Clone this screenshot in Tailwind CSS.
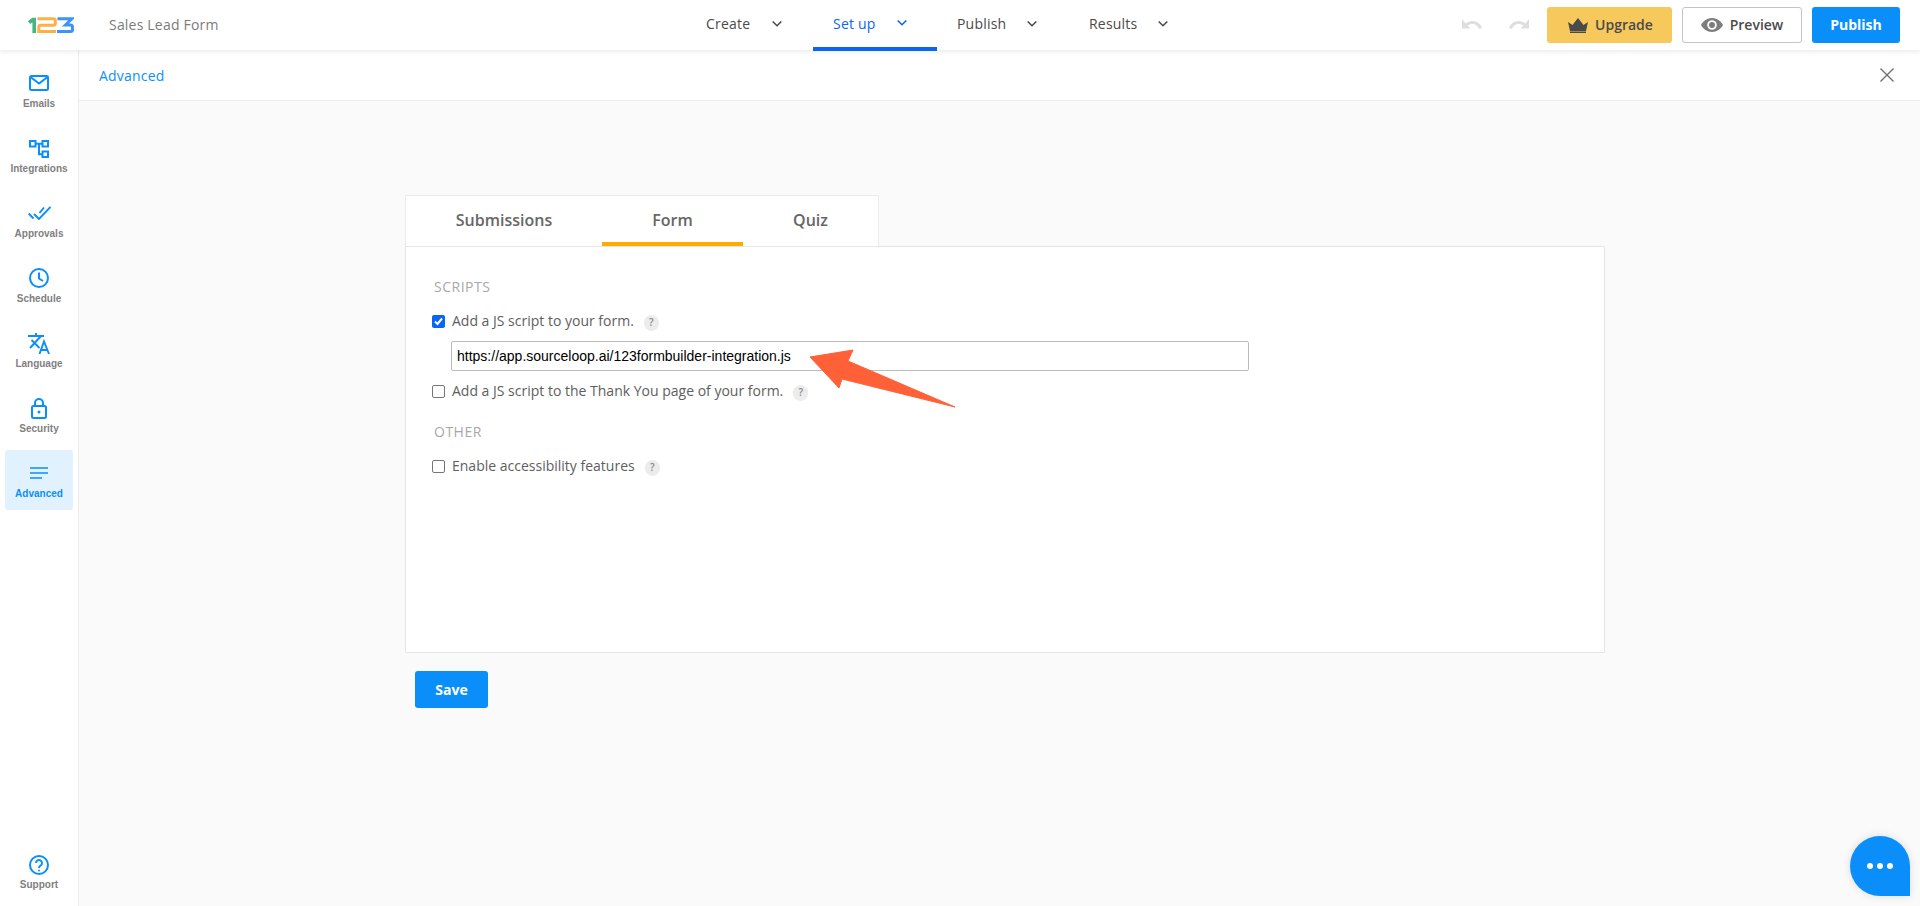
<!DOCTYPE html>
<html lang="en">
<head>
<meta charset="utf-8">
<title>Sales Lead Form</title>
<script src="https://cdn.jsdelivr.net/npm/@tailwindcss/browser@4"></script>
</head>
<body class="h-[906px] w-[1920px] overflow-hidden bg-[#fafafa] font-['Open_Sans','Noto_Sans',sans-serif]">
<div class="relative flex h-[906px] flex-col">

    <!-- top bar -->
    <header class="relative z-10 flex h-[50px] shrink-0 items-center bg-white shadow-[0_1px_6px_rgba(0,0,0,0.1)]">
        <svg class="ml-[28px] h-[18px] w-[46px]" viewBox="0 0 46 18" fill="none">
            <path d="M1 6.500 5 3.500H6.200V17" stroke="#41b883" stroke-width="3.600"/>
            <path d="M9.500 2.700H25.500Q27.300 2.700 27.300 4.500V7.500Q27.300 9.300 25.500 9.300H12.500Q10.800 9.300 10.800 11V15.500H28" stroke="#fcb045" stroke-width="3"/>
            <path d="M29.500 2.700H44L37.500 9H42.500Q44.500 9 44.500 11V13.500Q44.500 15.500 42.500 15.500H29" stroke="#3d94f6" stroke-width="3"/>
        </svg>
        <span class="ml-[35px] text-sm font-medium tracking-[0.2px] text-[#7b7b7b]">Sales Lead Form</span>

        <nav class="absolute left-[813px] top-0 flex h-[50px] items-center text-sm font-medium tracking-[0.2px] text-[#4a4a4a]">
            <a class="ml-[-107px] flex h-full w-[107px] items-center"><span class="mb-[2px]">Create</span><svg class="mb-[2px] ml-[22px] h-2 w-[10px]" viewBox="0 0 10 8" fill="none" stroke="currentColor" stroke-width="1.600"><path d="M.7 1.500 5 5.700 9.300 1.500"/></svg></a>
            <a class="relative flex h-full w-[124px] items-center pl-[20px] text-[#0a66f0]"><span class="mb-[2px]">Set up</span><svg class="mb-1 ml-[21px] h-2 w-[10px]" viewBox="0 0 10 8" fill="none" stroke="currentColor" stroke-width="1.600"><path d="M.7 1.500 5 5.700 9.300 1.500"/></svg><span class="absolute bottom-[-1px] left-0 h-1 w-full bg-[#0a66f0]"></span></a>
            <a class="ml-[20px] flex h-full w-[132px] items-center"><span class="mb-[2px]">Publish</span><svg class="mb-[2px] ml-[21px] h-2 w-[10px]" viewBox="0 0 10 8" fill="none" stroke="currentColor" stroke-width="1.600"><path d="M.7 1.500 5 5.700 9.300 1.500"/></svg></a>
            <a class="flex h-full items-center"><span class="mb-[2px]">Results</span><svg class="mb-[2px] ml-[21px] h-2 w-[10px]" viewBox="0 0 10 8" fill="none" stroke="currentColor" stroke-width="1.600"><path d="M.7 1.500 5 5.700 9.300 1.500"/></svg></a>
        </nav>

        <div class="ml-auto mr-[20px] flex items-center">
            <svg class="h-[14px] w-[21px] text-[#dedede]" viewBox="0 0 21 14" fill="currentColor"><path d="M0 1v9.500h8.500L5.600 7.600C7 6.600 8.500 6 10.300 6c3.200 0 5.800 2 6.800 5l3-1C18.700 5.800 14.800 3 10.300 3 7.800 3 5.500 3.900 3.700 5.500Z"/></svg>
            <svg class="ml-[25px] h-[14px] w-[21px] -scale-x-100 text-[#dedede]" viewBox="0 0 21 14" fill="currentColor"><path d="M0 1v9.500h8.500L5.600 7.600C7 6.600 8.500 6 10.300 6c3.200 0 5.800 2 6.800 5l3-1C18.700 5.800 14.800 3 10.300 3 7.800 3 5.500 3.900 3.700 5.500Z"/></svg>
            <button class="ml-[18px] flex h-[36px] w-[125px] items-center justify-center rounded-[3px] bg-[#f7c95c] pl-[2px] text-sm font-semibold text-[#4a4a4a]">
                <svg class="mr-[7px] h-[15px] w-5" viewBox="0 0 20 15" fill="currentColor"><path d="M0 4l4.500 3L10 0l5.500 7L20 4l-2 9H2Z"/><rect x="2" y="13.500" width="16" height="1.500"/></svg>Upgrade
            </button>
            <button class="ml-[10px] flex h-[36px] w-[120px] items-center justify-center rounded-[3px] border border-[#c4c4c4] bg-white text-sm font-semibold text-[#4a4a4a]">
                <svg class="mr-[7px] h-[14px] w-[22px] text-[#7d7d7d]" viewBox="0 0 22 14" fill="currentColor"><path fill-rule="evenodd" d="M11 0C6 0 2.300 3 0 7c2.300 4 6 7 11 7s8.700-3 11-7c-2.300-4-6-7-11-7Zm0 2.200a4.800 4.800 0 1 1 0 9.600 4.800 4.800 0 0 1 0-9.600Z"/><circle cx="11" cy="7" r="3"/></svg>Preview
            </button>
            <button class="ml-[10px] h-[36px] w-[88px] rounded-[3px] bg-[#0a8ffa] text-sm font-bold text-white">Publish</button>
        </div>
    </header>

    <div class="flex min-h-0 flex-1">
        <!-- left rail -->
        <aside class="flex w-[79px] shrink-0 flex-col items-center border-r border-[#ececec] bg-white pt-[10px] font-['Liberation_Sans',sans-serif] text-[10px] font-bold text-[#808080]">
            <a class="flex h-[65px] w-[68px] flex-col items-center pt-[15px]">
                <svg class="h-4 w-5 text-[#0a8ffa]" viewBox="0 0 20 16" fill="none" stroke="currentColor" stroke-width="2"><rect x="1" y="1" width="18" height="14" rx="1.500"/><path d="M1.500 2 10 8.500 18.500 2"/></svg>
                <span class="mt-[7px] leading-[12px]">Emails</span>
            </a>
            <a class="flex h-[65px] w-[68px] flex-col items-center pt-[15px]">
                <svg class="h-[18px] w-5 text-[#0a8ffa]" viewBox="0 0 20 18" fill="none" stroke="currentColor" stroke-width="2"><rect x="1" y="1" width="5.500" height="5.500"/><rect x="13.500" y="1" width="5.500" height="5.500"/><rect x="13.500" y="11.500" width="5.500" height="5.500"/><path d="M6.500 3.700H13.500M10 3.700V14.200H13.500"/></svg>
                <span class="mt-[5px] leading-[12px]">Integrations</span>
            </a>
            <a class="flex h-[65px] w-[68px] flex-col items-center pt-[16px]">
                <svg class="h-[14px] w-[23px] text-[#0a8ffa]" viewBox="0 0 23 14" fill="none" stroke="currentColor" stroke-width="1.900"><path d="M.7 7.500 5.500 12.500M6 8l5 5L22.500 1M11.500 7 16 1.500"/></svg>
                <span class="mt-[8px] leading-[12px]">Approvals</span>
            </a>
            <a class="flex h-[65px] w-[68px] flex-col items-center pt-[13px]">
                <svg class="h-5 w-5 text-[#0a8ffa]" viewBox="0 0 20 20" fill="none" stroke="currentColor" stroke-width="2"><circle cx="10" cy="10" r="9"/><path d="M10 4.500V10.500L14 13"/></svg>
                <span class="mt-[5px] leading-[12px]">Schedule</span>
            </a>
            <a class="flex h-[65px] w-[68px] flex-col items-center pt-[13px]">
                <svg class="h-[21px] w-[22px] text-[#0a8ffa]" viewBox="0 0 22 21" fill="none" stroke="currentColor" stroke-width="1.900"><path d="M0 3h16M8 0v3M2 15 13 3M3.500 7 11.500 15M11.500 21 16 8.500l5 12.500M13 17h6.500"/></svg>
                <span class="mt-[4px] leading-[12px]">Language</span>
            </a>
            <a class="flex h-[65px] w-[68px] flex-col items-center pt-[13px]">
                <svg class="h-[21px] w-4 text-[#0a8ffa]" viewBox="0 0 16 21" fill="none" stroke="currentColor" stroke-width="2"><rect x="1" y="8" width="14" height="12" rx="1.500"/><path d="M4 8V5a4 4 0 0 1 8 0v3"/><circle cx="8" cy="14" r="1.500" fill="currentColor" stroke="none"/></svg>
                <span class="mt-[4px] leading-[12px]">Security</span>
            </a>
            <a class="flex h-[60px] w-[68px] flex-col items-center rounded-[3px] bg-[#e1f1fe] pt-[17px] text-[#0a8ffa]">
                <svg class="h-3 w-[18px]" viewBox="0 0 18 12" fill="none" stroke="currentColor" stroke-width="1.700"><path d="M0 1h18M0 6h18M0 11h12"/></svg>
                <span class="mt-[9px] leading-[12px]">Advanced</span>
            </a>
            <a class="mb-[15px] mt-auto flex w-[68px] flex-col items-center">
                <svg class="h-5 w-5 text-[#0a8ffa]" viewBox="0 0 20 20" fill="none" stroke="currentColor" stroke-width="2"><circle cx="10" cy="10" r="9"/><path d="M7 8a3 3 0 1 1 4.600 2.500C10.500 11.200 10 11.800 10 13"/><circle cx="10" cy="15.500" r="1" fill="currentColor" stroke="none"/></svg>
                <span class="mt-[4px] leading-[12px]">Support</span>
            </a>
        </aside>

        <main class="min-w-0 flex-1">
            <div class="flex h-[51px] items-center justify-between border-b border-[#ececec] bg-white pl-[20px] pr-[26px]">
                <span class="mt-[2px] text-sm tracking-[0.2px] text-[#0a8ffa]">Advanced</span>
                <svg class="h-[14px] w-[14px] text-[#6f6f6f]" viewBox="0 0 14 14" fill="none" stroke="currentColor" stroke-width="1.400"><path d="M.5.5l13 13M13.500.5l-13 13"/></svg>
            </div>

            <div class="ml-[326px] mt-[94px] w-[1200px]">
                <!-- tabs -->
                <div class="flex h-[51px] w-[474px] border border-b-0 border-[#ebebeb] bg-white text-base font-semibold text-[#666]">
                    <a class="flex w-[196px] items-center justify-center pb-[2px]">Submissions</a>
                    <a class="flex w-[141px] items-center justify-center border-b-4 border-[#ffab00] pt-[2px]">Form</a>
                    <a class="flex flex-1 items-center justify-center pb-[2px]">Quiz</a>
                </div>

                <section class="h-[407px] border border-[#e6e6e6] bg-white pl-[26px] pt-[30px] text-sm text-[#5e5e5e]">
                    <h3 class="pl-[2px] text-sm leading-5 tracking-[0.5px] text-[#a8a8a8]">SCRIPTS</h3>
                    <label class="mt-[14px] flex h-5 items-center">
                        <span class="flex h-[13px] w-[13px] items-center justify-center rounded-[2px] bg-[#0a66f0]">
                            <svg class="h-[11px] w-[11px]" viewBox="0 0 11 11" fill="none" stroke="#fff" stroke-width="2"><path d="M2 5.500 4.500 8 9 2.500"/></svg>
                        </span>
                        <span class="ml-[7px]">Add a JS script to your form.</span>
                        <span class="ml-[10px] mt-[2px] flex h-[15px] w-[15px] items-center justify-center rounded-full bg-[#ececec] text-[10px] font-semibold text-[#888] shadow-[0_1px_1px_rgba(0,0,0,0.08)]">?</span>
                    </label>
                    <input class="ml-[19px] mt-[10px] block h-[30px] w-[798px] rounded-[2px] border border-[#bbb] bg-white px-[5px] font-['Liberation_Sans',sans-serif] text-[14px] text-black" value="https://app.sourceloop.ai/123formbuilder-integration.js">
                    <label class="mt-[10px] flex h-5 items-center">
                        <span class="h-[13px] w-[13px] rounded-[2px] border border-[#767676] bg-white"></span>
                        <span class="ml-[7px]">Add a JS script to the Thank You page of your form.</span>
                        <span class="ml-[10px] mt-[2px] flex h-[15px] w-[15px] items-center justify-center rounded-full bg-[#ececec] text-[10px] font-semibold text-[#888] shadow-[0_1px_1px_rgba(0,0,0,0.08)]">?</span>
                    </label>
                    <h3 class="mt-[21px] pl-[2px] text-sm leading-5 tracking-[0.5px] text-[#a8a8a8]">OTHER</h3>
                    <label class="mt-[14px] flex h-5 items-center">
                        <span class="h-[13px] w-[13px] rounded-[2px] border border-[#767676] bg-white"></span>
                        <span class="ml-[7px]">Enable accessibility features</span>
                        <span class="ml-[10px] mt-[2px] flex h-[15px] w-[15px] items-center justify-center rounded-full bg-[#ececec] text-[10px] font-semibold text-[#888] shadow-[0_1px_1px_rgba(0,0,0,0.08)]">?</span>
                    </label>
                </section>

                <button class="ml-[10px] mt-[18px] h-[37px] w-[73px] rounded-[3px] bg-[#0a8ffa] text-sm font-bold text-white">Save</button>
            </div>
        </main>
    </div>

    <!-- annotation arrow drawn over the form -->
    <svg class="absolute left-[800px] top-[340px] h-[80px] w-[170px]" viewBox="800 340 170 80">
        <path d="M810 357 853 350 848 361 955 407 842 379 839 388Z" fill="#ff6038" stroke="#ff6038" stroke-width="1" stroke-linejoin="round"/>
    </svg>

    <!-- chat bubble -->
    <div class="absolute left-[1850px] top-[836px] flex h-[60px] w-[60px] items-center justify-center gap-[4px] rounded-[30px] rounded-br-none bg-[#0a8ffa] shadow-[0_0_8px_rgba(0,0,0,0.12)]">
        <span class="h-[6px] w-[6px] rounded-full bg-white"></span>
        <span class="h-[6px] w-[6px] rounded-full bg-white"></span>
        <span class="h-[6px] w-[6px] rounded-full bg-white"></span>
    </div>
</div>
</body>
</html>
